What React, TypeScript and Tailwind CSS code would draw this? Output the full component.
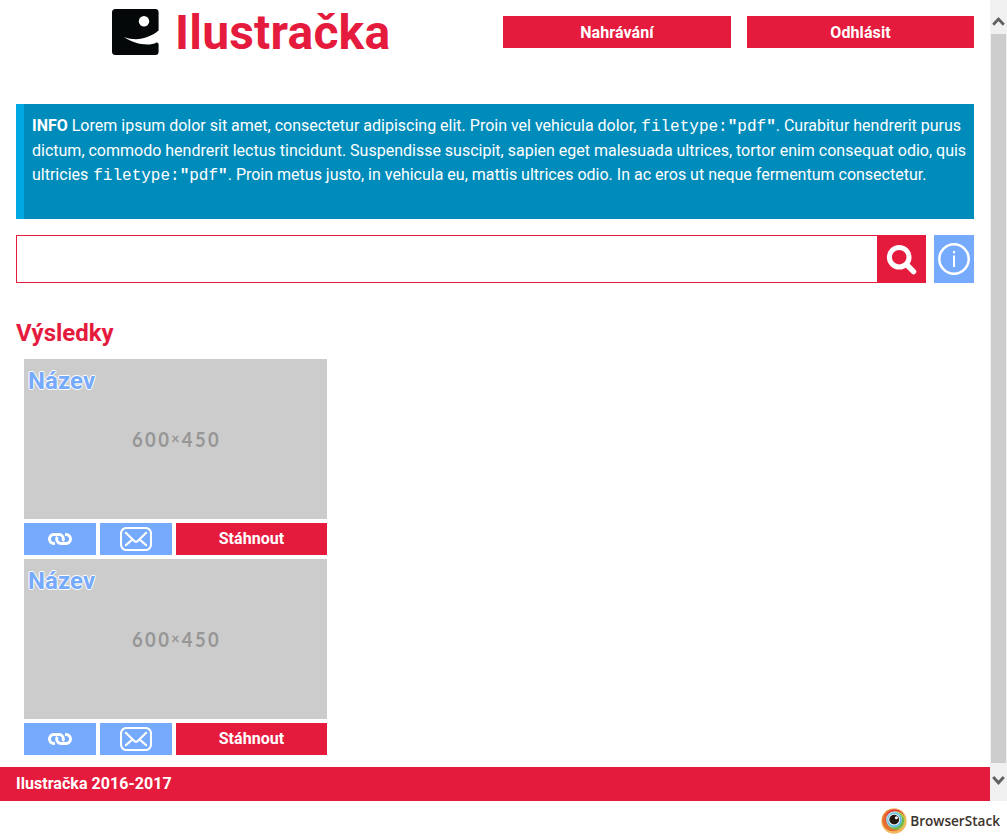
import React from 'react';

function Logo() {
  return (
    <svg className="block h-[47px] w-[47px] shrink-0" viewBox="0 0 47 47">
      <path
        d="M3.5 0H43.5Q46.6 0 46.6 3.5V21.5C40 27 32 30 24 30.2C20 30.2 16 29.6 12 28C20 33.5 29 36 38 35.4C41 35.2 42.5 34.6 44.6 33.6Q46.6 33.4 46.6 35.5V42.5Q46.6 46 43.5 46H3.5Q0 46 0 42.5V3.5Q0 0 3.5 0Z"
        fill="#050808"
      />
      <circle cx="32" cy="12.3" r="5.2" fill="#fff" />
    </svg>
  );
}

function SearchIcon() {
  return (
    <svg className="-mt-px -ml-[2px] block h-[32px] w-[32px]" viewBox="0 0 32 32" fill="none" stroke="#fff">
      <circle cx="14.2" cy="14.2" r="9.8" strokeWidth="5" />
      <path d="M21.5 21.5L28.6 28.6" strokeWidth="5.4" strokeLinecap="round" />
    </svg>
  );
}

function InfoIcon() {
  return (
    <svg className="block h-[32px] w-[32px]" viewBox="0 0 32 32" fill="none" stroke="#fff">
      <circle cx="16" cy="16" r="14.7" strokeWidth="2.5" />
      <path d="M16 12.5V24" strokeWidth="2" />
      <path d="M16 8V10.3" strokeWidth="2.2" />
    </svg>
  );
}

function LinkIcon() {
  return (
    <svg className="block h-[12px] w-[24px]" viewBox="0 0 24 12" fill="none" stroke="#fff" strokeWidth="3">
      <path d="M7 10.5H5.8A4.3 4.3 0 0 1 1.5 6.2V5.8A4.3 4.3 0 0 1 5.8 1.5H11A4.3 4.3 0 0 1 15.3 5.8V6.2A4 4 0 0 1 14.6 8.2" />
      <path d="M17 1.5H18.2A4.3 4.3 0 0 1 22.5 5.8V6.2A4.3 4.3 0 0 1 18.2 10.5H13A4.3 4.3 0 0 1 8.7 6.2V5.8A4 4 0 0 1 9.4 3.8" />
    </svg>
  );
}

function MailIcon() {
  return (
    <svg
      className="block h-[24px] w-[32px]"
      viewBox="0 0 32 24"
      fill="none"
      stroke="#fff"
      strokeWidth="2.1"
      strokeLinecap="round"
      strokeLinejoin="round"
    >
      <rect x="1" y="1" width="30" height="22" rx="5.5" />
      <path d="M5.8 5.8L14.6 14.2Q16 15.5 17.4 14.2L26.2 5.8M5.8 18.2L12.5 12.4M26.2 18.2L19.5 12.4" />
    </svg>
  );
}

function BrowserStackMark() {
  return (
    <svg className="block h-[26px] w-[26px]" viewBox="0 0 26 26">
      <circle cx="13" cy="13" r="12.7" fill="#f4b960" />
      <circle cx="12.2" cy="12.2" r="11" fill="#e66f32" />
      <circle cx="14" cy="11" r="9.7" fill="#e43c41" />
      <circle cx="15" cy="12.4" r="9.2" fill="#bdd041" />
      <circle cx="14.6" cy="13" r="8.4" fill="#6db54c" />
      <circle cx="13" cy="11.6" r="8" fill="#aedae6" />
      <circle cx="13.5" cy="12" r="7.2" fill="#56b8de" />
      <circle cx="13.2" cy="11.6" r="5.9" fill="#f4fbfd" />
      <circle cx="13.2" cy="11.6" r="4.9" fill="#20170f" />
      <circle cx="15.4" cy="9.8" r="1.5" fill="#fff" />
    </svg>
  );
}

function Code() {
  return (
    <span className="ml-px font-['Liberation_Mono','Courier_New',monospace] text-[16px] leading-none">
      filetype:<b>"</b>pdf<b>"</b>
    </span>
  );
}

function ResultCard() {
  return (
    <article className="flex w-[303px] flex-col gap-1">
      <div className="relative flex h-[160px] items-center justify-center bg-[#ccc]">
        <h3 className="absolute top-[7px] left-1 text-[24px] leading-[30px] font-bold tracking-[0.1px] text-[#76aafc] [text-shadow:1px_0_#fff,-1px_0_#fff,0_1px_#fff,0_-1px_#fff]">
          Název
        </h3>
        <span className="flex scale-x-[0.88] items-center pb-[2px] pl-[2px] font-[Lato,sans-serif] text-[21px] leading-none font-bold tracking-[2.7px] text-[#969696]">
          600<span className="text-[16px]">×</span>450
        </span>
      </div>
      <div className="flex h-8 gap-1 text-white">
        <button className="flex w-[72px] items-center justify-center bg-[#76aafc]">
          <LinkIcon />
        </button>
        <button className="flex w-[72px] items-center justify-center bg-[#76aafc]">
          <MailIcon />
        </button>
        <button className="flex-1 bg-[#e51b3e] text-[16px] font-bold tracking-[0.05px]">Stáhnout</button>
      </div>
    </article>
  );
}

export default function App() {
  return (
    <div className="flex h-[840px] w-[1007px] flex-col overflow-hidden bg-white font-[Roboto,sans-serif] text-[16px]">
      <div className="flex h-[801px]">
        <div className="flex w-[990px] flex-col">
          <header className="flex h-[104px] items-start pr-4 pl-[112px]">
            <div className="flex w-[391px] items-start gap-4 pt-[9px]">
              <Logo />
              <h1 className="-mt-1 text-[48px] leading-[56px] font-bold tracking-[0.2px] text-[#e51b3e]">Ilustračka</h1>
            </div>
            <nav className="flex flex-1 gap-4 pt-4 font-bold text-white">
              <button className="h-8 w-[228px] bg-[#e51b3e] pt-[2px] tracking-[0.1px]">Nahrávání</button>
              <button className="h-8 w-[227px] bg-[#e51b3e] pt-[2px] tracking-[0.1px]">Odhlásit</button>
            </nav>
          </header>
          <main className="flex flex-1 flex-col px-4">
            <p className="h-[115px] border-l-8 border-[#00a8e1] bg-[#008cba] pt-[10px] pl-2 leading-[24.5px] whitespace-nowrap text-white">
              <b>INFO</b> Lorem ipsum dolor sit amet, consectetur adipiscing elit. Proin vel vehicula dolor, <Code />.
              Curabitur hendrerit purus
              <br />
              dictum, commodo hendrerit lectus tincidunt. Suspendisse suscipit, sapien eget malesuada ultrices, tortor
              enim consequat odio, quis
              <br />
              ultricies <Code />. Proin metus justo, in vehicula eu, mattis ultrices odio. In ac eros ut neque fermentum
              consectetur.
            </p>
            <div className="mt-4 flex h-12">
              <input className="w-[861px] border border-r-0 border-[#e51b3e] bg-white px-2 outline-none" />
              <button className="flex w-[49px] items-center justify-center bg-[#e51b3e]">
                <SearchIcon />
              </button>
              <button className="ml-2 flex w-10 items-center justify-center bg-[#76aafc]">
                <InfoIcon />
              </button>
            </div>
            <h2 className="mt-[34px] h-[42px] text-[24px] leading-[32px] font-bold text-[#e51b3e]">Výsledky</h2>
            <section className="flex flex-col gap-1 pl-2">
              <ResultCard />
              <ResultCard />
            </section>
          </main>
          <footer className="h-[34px] bg-[#e51b3e] pl-4 leading-[34px] font-bold tracking-[0.04px] text-white">
            Ilustračka 2016-2017
          </footer>
        </div>
        <div className="flex w-[17px] flex-col items-center bg-[#f0f0f0]">
          <svg className="block h-[34px] w-[17px]" viewBox="0 0 17 34" fill="none" stroke="#606060" strokeWidth="2.8">
            <path d="M3.2 24.8L8.5 19L13.8 24.8" />
          </svg>
          <div className="h-[729px] w-[15px] bg-[#cdcdcd]" />
          <svg className="block h-[38px] w-[17px]" viewBox="0 0 17 38" fill="none" stroke="#606060" strokeWidth="2.8">
            <path d="M3.2 14L8.5 19.8L13.8 14" />
          </svg>
        </div>
      </div>
      <div className="flex h-[39px] items-center justify-end gap-[3px] pr-[7px]">
        <BrowserStackMark />
        <span className="font-['Open_Sans',sans-serif] text-[13.6px] leading-none font-semibold text-[#3b322c]">
          BrowserStack
        </span>
      </div>
    </div>
  );
}
